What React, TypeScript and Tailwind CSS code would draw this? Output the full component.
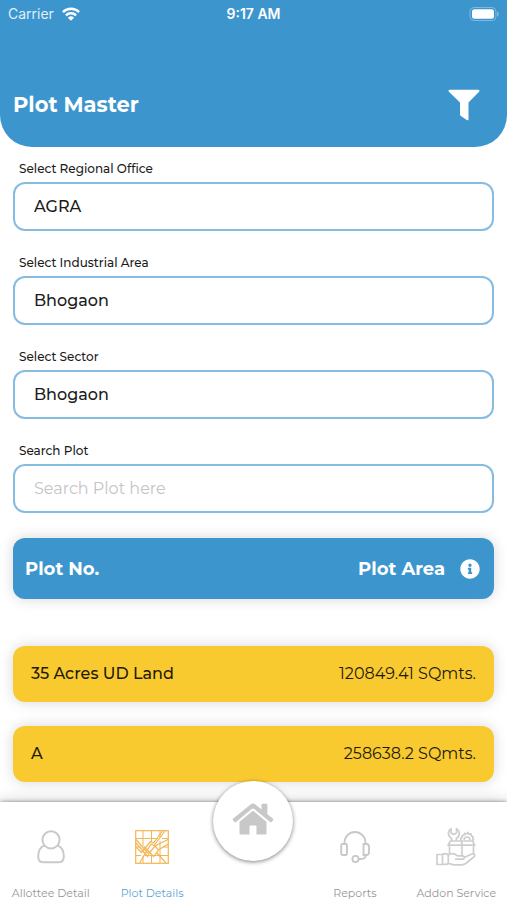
import { useState } from "react";
import type { ReactNode } from "react";
import { FaInfoCircle } from "react-icons/fa";

const plots = [
  { name: "35 Acres UD Land", area: "120849.41 SQmts." },
  { name: "A", area: "258638.2 SQmts." },
];

function StatusBar() {
  return (
    <div className="grid grid-cols-3 items-center px-2 py-1 font-[Inter,sans-serif] text-sm leading-5 text-white">
      <div className="flex items-center gap-2">
        <span className="text-[#dff0fb]">Carrier</span>
        <svg viewBox="0 0 18 14" className="h-[14px] w-[18px]" fill="none" stroke="white" strokeWidth="2.4" aria-hidden="true">
          <path d="M0.9 5.1a11.6 11.6 0 0 1 16.2 0" />
          <path d="M3.9 8.3a7.3 7.3 0 0 1 10.2 0" />
          <path d="M9 13.8 5.9 10.7a4.5 4.5 0 0 1 6.2 0z" fill="white" stroke="none" />
        </svg>
      </div>
      <div className="text-center font-semibold">9:17 AM</div>
      <div className="flex justify-end">
        <svg viewBox="0 0 30 14" className="h-[14px] w-[30px]" aria-hidden="true">
          <rect x="1" y="0.5" width="26" height="13" rx="4" fill="none" stroke="#7db9e0" />
          <rect x="3" y="2.3" width="22" height="9.4" rx="2.5" fill="white" />
          <path d="M28.3 4.5c1.8.7 1.8 4.3 0 5z" fill="#8fc3e6" />
        </svg>
      </div>
    </div>
  );
}

const fieldClass =
  "block h-[49px] w-full appearance-none rounded-xl border-2 border-[#86bce1] bg-white px-[19px] text-base font-medium text-[#1b1b1b] outline-none placeholder:font-normal placeholder:text-[#c4c4c6]";

function Field({ id, label, children }: { id: string; label: string; children: ReactNode }) {
  return (
    <div>
      <label htmlFor={id} className="mb-[3px] block px-[6px] text-xs leading-5 font-medium text-[#1b1b1b]">
        {label}
      </label>
      {children}
    </div>
  );
}

function SelectField({ id, label, value }: { id: string; label: string; value: string }) {
  return (
    <Field id={id} label={label}>
      <select id={id} className={fieldClass} defaultValue={value}>
        <option value={value}>{value}</option>
      </select>
    </Field>
  );
}

function PersonIcon() {
  return (
    <svg viewBox="0 0 28 34" className="h-[34px] w-7" fill="none" stroke="#c9c9c9" strokeWidth="2" aria-hidden="true">
      <circle cx="14" cy="9.8" r="8.6" />
      <path d="M7.4 15.6C3.2 17 1.2 21.3 1.2 26.5c0 4.2 1.6 5.7 5 5.7h15.6c3.4 0 5-1.5 5-5.7 0-5.2-2-9.5-6.2-10.9" strokeLinejoin="round" />
    </svg>
  );
}

function PlotIcon() {
  return (
    <svg viewBox="0 0 34 34" className="size-[34px]" fill="none" stroke="#f4b555" strokeWidth="1.2" aria-hidden="true">
      <rect x="0.7" y="0.7" width="32.6" height="32.6" />
      <path d="M8 1v15M16.5 1v11M25 1v6M25 11v22M1 8.5h22M27 8.5h6M1 17h5M28 17h5M1 25.5h5M10 25.5h23M8 26v7M16.5 24v9" strokeWidth="1" />
      <path d="M27.5 1 18.5 13 15.5 11.5 6.500 22.500 1 17M30 1 19 15.500 16 14 4.500 33" />
      <path d="M1 9.500 13.500 24 20 16l3.500 4-5 6.500L9 16.500M1 13l12 14M20 16 33 9.500M23.500 20 33 14M22 23l9 10" />
    </svg>
  );
}

function HomeIcon() {
  return (
    <svg viewBox="0 0 42 32" className="h-8 w-[42px]" fill="#c8c8c8" aria-hidden="true">
      <path d="M18.600 1.500c1.500-1.200 3.300-1.200 4.800 0L29.500 6.400V2c0-.8.400-1.200 1.200-1.200h3.500c.8 0 1.200.4 1.200 1.200v9.200l5.400 4.400c.6.5.7 1 .2 1.600l-1.400 1.700c-.5.600-1 .6-1.600.1L22.300 6.100c-.9-.7-1.700-.7-2.600 0L4 19c-.6.500-1.100.5-1.600-.1L1 17.200c-.5-.6-.4-1.100.2-1.600z" />
      <path d="M20 8.500c.7-.6 1.300-.6 2 0L34.500 18.700V30c0 1-.5 1.500-1.500 1.500h-8.500v-8.200c0-.6-.3-.9-.9-.9h-5.200c-.6 0-.9.3-.9.900v8.200H9c-1 0-1.500-.5-1.500-1.500V18.700z" />
    </svg>
  );
}

function HeadsetIcon() {
  return (
    <svg viewBox="0 0 30 32" className="h-8 w-[30px]" fill="none" stroke="#c8c8c8" strokeWidth="1.9" aria-hidden="true">
      <path d="M4.5 12.500V11.500a10.500 10.500 0 0 1 21 0v1" />
      <rect x="1.2" y="13" width="5.8" height="11" rx="1.2" />
      <path d="M23.500 13h2.800c1.600 0 2.700 1.200 2.700 2.800v5.400c0 1.600-1.100 2.800-2.700 2.800h-2.800z" />
      <circle cx="15.5" cy="28" r="3.1" />
      <path d="M18.600 28h2.400c3 0 4.700-1.500 4.900-4" />
    </svg>
  );
}

function AddonIcon() {
  return (
    <svg viewBox="0 0 40 40" className="size-10" fill="none" stroke="#cecece" strokeWidth="1.7" strokeLinejoin="round" aria-hidden="true">
      <path d="M15.600 14V11.500C11.500 9 11.500 4 15 1.600V6l2.800 1.600L20.500 6V1.600c3.800 2.400 3.800 7.400-.2 9.900V14" />
      <path d="M25.500 14c-.7-1-.9-2-.9-3l1.400-.6.300-1.900 1.700-.3.700-1.800 1.800.6L31.800 5.500l1.200 1.700 2-.3.300 2 1.800.8-.4 1.900.8 1c0 .6-.4 1-.8 1.400M28 13c0-4 6-4 6 0" />
      <path d="M14.500 14h10.800l1.200 4.200H12zM25.300 14h11.200l2.300 4.200H26.500zM13.500 18.200v9.500M26 18.200V28M37.500 18.200v9" />
      <path d="M1 27.500h5.500v10H1zM6.500 26.800h3.800c1.300 0 2 .7 2 2v6.500c0 1.300-.7 2-2 2H6.500M12.300 28c3-2 6.200-1.600 9.200.8h5c2.300 0 2.300 3.400 0 3.400H19M28.300 30.500l7.500-3.500c2.400-1.100 3.800 1.500 2 3l-8 6.500c-1.300 1-2.600 1.300-4.300 1.300H18c-2.300 0-3.300-1.300-5.700-1.300" />
    </svg>
  );
}

function NavItem({ label, active = false, children }: { label: string; active?: boolean; children: ReactNode }) {
  return (
    <a href="#" aria-current={active ? "page" : undefined} className="flex flex-col items-center justify-between pt-6">
      <span className="flex h-[42px] items-center justify-center">{children}</span>
      <span className={`text-[11px] leading-[13px] whitespace-nowrap ${active ? "text-[#5aa6d8]" : "text-[#969696]"}`}>{label}</span>
    </a>
  );
}

export default function App() {
  const [query, setQuery] = useState("");
  const visible = plots.filter((p) => p.name.toLowerCase().includes(query.toLowerCase()));

  return (
    <div className="flex min-h-screen flex-col bg-white font-[Montserrat,Inter,sans-serif]">
      <header className="rounded-b-[32px] bg-[#3d95ce]">
        <StatusBar />
        <div className="flex items-center justify-between pt-[53px] pr-[27px] pb-[18px] pl-[13px]">
          <h1 className="text-[21px] leading-7 font-bold text-white">Plot Master</h1>
          <button type="button" aria-label="Filter plots" className="flex h-12 w-8 items-center justify-center">
            <svg viewBox="0 0 32 32" className="size-8" fill="white" aria-hidden="true">
              <path d="M1.800.8h28.400c1.200 0 1.700 1.200.9 2L20.500 13.500v16.700c0 1-.9 1.400-1.700.9l-6-4.100c-.5-.3-.8-.8-.8-1.400V13.500L.9 2.800C.1 2 .6.8 1.800.8z" />
            </svg>
          </button>
        </div>
      </header>

      <main className="flex-1 px-[13px] pt-3 pb-5">
        <form className="flex flex-col gap-[22px]" onSubmit={(e) => e.preventDefault()}>
          <SelectField id="office" label="Select Regional Office" value="AGRA" />
          <SelectField id="area" label="Select Industrial Area" value="Bhogaon" />
          <SelectField id="sector" label="Select Sector" value="Bhogaon" />
          <Field id="search" label="Search Plot">
            <input
              id="search"
              type="text"
              placeholder="Search Plot here"
              value={query}
              onChange={(e) => setQuery(e.target.value)}
              className={fieldClass}
            />
          </Field>
        </form>

        <table className="mt-[25px] block">
          <thead className="block">
            <tr className="flex h-[61px] items-center justify-between rounded-xl bg-[#3d95ce] pr-[14px] pl-3 text-lg text-white shadow-[0_0_14px_rgba(0,0,0,0.16)]">
              <th scope="col" className="font-bold">Plot No.</th>
              <th scope="col" className="flex items-center gap-[15px] font-bold">
                Plot Area
                <button type="button" aria-label="About plot area">
                  <FaInfoCircle className="size-5" />
                </button>
              </th>
            </tr>
          </thead>
          <tbody className="mt-[47px] flex flex-col gap-6">
            {visible.map((plot) => (
              <tr
                key={plot.name}
                className="flex h-14 items-center justify-between rounded-xl bg-[#f9ca30] px-[18px] text-base text-[#1f1a08] shadow-[0_0_14px_rgba(0,0,0,0.16)]"
              >
                <td className="font-medium">{plot.name}</td>
                <td>{plot.area}</td>
              </tr>
            ))}
          </tbody>
        </table>
      </main>

      <nav aria-label="Main" className="sticky bottom-0 grid h-[98px] grid-cols-5 bg-white shadow-[0_0_4px_rgba(0,0,0,0.45),0_0_16px_rgba(0,0,0,0.2)]">
        <NavItem label="Allottee Detail"><PersonIcon /></NavItem>
        <NavItem label="Plot Details" active><PlotIcon /></NavItem>
        <a
          href="#"
          aria-label="Home"
          className="-mt-[21px] flex size-20 items-center justify-center justify-self-center rounded-full bg-white pb-1 shadow-[0_1px_4px_rgba(0,0,0,0.5)]"
        >
          <HomeIcon />
        </a>
        <NavItem label="Reports"><HeadsetIcon /></NavItem>
        <NavItem label="Addon Service"><AddonIcon /></NavItem>
      </nav>
    </div>
  );
}
